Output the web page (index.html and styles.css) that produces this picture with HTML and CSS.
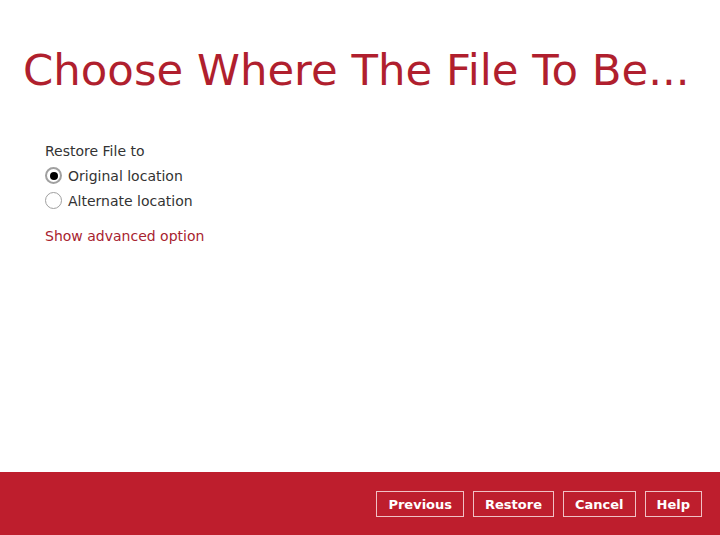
FILE: index.html
```html
<!DOCTYPE html>
<html>
<head>
<meta charset="utf-8">
<link rel="stylesheet" href="styles.css">
</head>
<body>
<div class="page">
  <main class="content">
    <h1 class="title">Choose Where The File To Be...</h1>
    <div class="form">
      <div class="label">Restore File to</div>
      <label class="radio-row"><span class="radio checked"></span><span>Original location</span></label>
      <label class="radio-row"><span class="radio"></span><span>Alternate location</span></label>
      <a class="link" href="#">Show advanced option</a>
    </div>
  </main>
  <footer class="footer">
    <button class="btn">Previous</button>
    <button class="btn">Restore</button>
    <button class="btn">Cancel</button>
    <button class="btn">Help</button>
  </footer>
</div>
</body>
</html>
```
FILE: styles.css
```css
html, body {
  margin: 0;
  padding: 0;
  background: #ffffff;
}
body {
  font-family: "DejaVu Sans", Verdana, sans-serif;
  color: #333333;
}
.page {
  width: 720px;
  height: 535px;
  display: flex;
  flex-direction: column;
}
.content {
  flex: 1;
  display: flex;
  flex-direction: column;
}
.title {
  margin: 44px 0 0 23px;
  font-weight: normal;
  font-size: 43.4px;
  line-height: 52px;
  color: #b01f2e;
  white-space: nowrap;
}
.form {
  margin: 46px 0 0 45px;
  display: flex;
  flex-direction: column;
  font-size: 14px;
}
.label {
  line-height: 18px;
  margin-bottom: 3px;
}
.radio-row {
  display: flex;
  align-items: center;
  gap: 6px;
  height: 25px;
}
.radio {
  width: 17px;
  height: 17px;
  border: 1px solid #a0a0a0;
  border-radius: 50%;
  box-sizing: border-box;
  display: flex;
  align-items: center;
  justify-content: center;
  background: #fff;
}
.radio.checked {
  border: 2px solid #a0a0a0;
}
.radio.checked::after {
  content: "";
  width: 8px;
  height: 8px;
  border-radius: 50%;
  background: #000;
}
.link {
  margin-top: 14px;
  color: #a8232f;
  text-decoration: none;
  line-height: 18px;
}
.footer {
  height: 63px;
  background: #be1e2d;
  display: flex;
  justify-content: flex-end;
  align-items: center;
  gap: 9px;
  padding: 1px 18px 0 0;
  box-sizing: border-box;
}
.btn {
  height: 26px;
  padding: 0 11px;
  border: 1px solid #f0c0c4;
  background: transparent;
  color: #ffffff;
  font-family: "DejaVu Sans", Verdana, sans-serif;
  font-weight: bold;
  font-size: 13px;
  cursor: pointer;
}
```
